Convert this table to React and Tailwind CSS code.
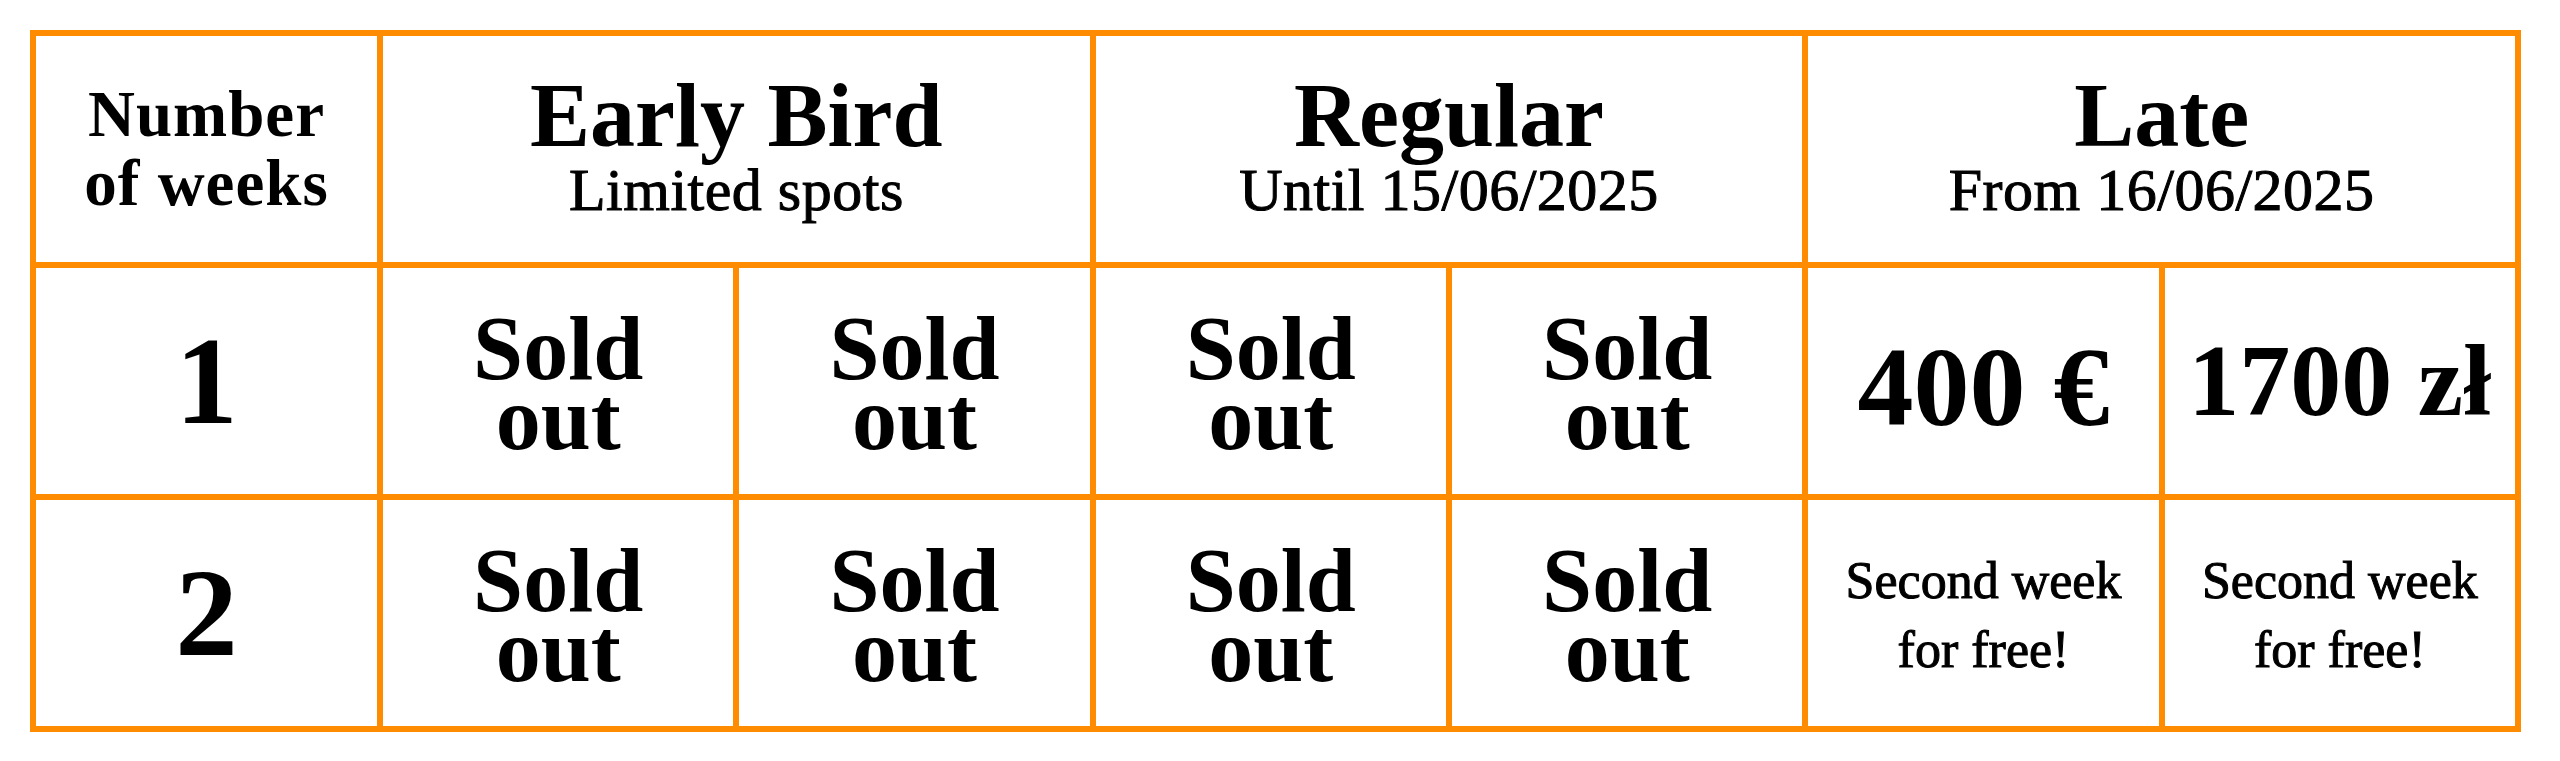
import React from "react";

const Header = ({ title, sub }) => (
  <div className="col-span-2 bg-white flex flex-col items-center justify-center">
    <span className="text-[90px] leading-[80px] font-bold">{title}</span>
    <span className="text-[60px] leading-[64px] mt-[2px] tracking-[0.5px] [-webkit-text-stroke:1px_black]">
      {sub}
    </span>
  </div>
);

const SoldOut = () => (
  <div className="bg-white flex flex-col items-center justify-center text-[90px] leading-[70px] font-bold pt-[6px]">
    <span>Sold</span>
    <span>out</span>
  </div>
);

const FreeWeek = () => (
  <div className="bg-white flex flex-col items-center justify-center text-[52px] leading-[69px] pt-[4px] [-webkit-text-stroke:1px_black]">
    <span>Second week</span>
    <span>for free!</span>
  </div>
);

const App = () => {
  return (
    <div className="min-h-[761px] bg-white pt-[30px] pl-[30px] font-['Liberation_Serif',serif] text-black">
      <div className="w-[2491px] h-[702px] bg-[#ff8c00] p-[6px] grid grid-cols-[341px_repeat(6,1fr)] grid-rows-3 gap-[6px]">
        {/* Header row */}
        <div className="bg-white flex flex-col items-center justify-center text-[65px] leading-[69px] font-bold tracking-[1px]">
          <span>Number</span>
          <span>of weeks</span>
        </div>
        <Header title="Early Bird" sub="Limited spots" />
        <Header title="Regular" sub="Until 15/06/2025" />
        <Header title="Late" sub="From 16/06/2025" />

        {/* 1 week */}
        <div className="bg-white flex items-center justify-center text-[125px] leading-none font-bold">
          1
        </div>
        <SoldOut />
        <SoldOut />
        <SoldOut />
        <SoldOut />
        <div className="bg-white flex items-center justify-center text-[112px] leading-none font-bold pt-[12px]">
          400 €
        </div>
        <div className="bg-white flex items-center justify-center text-[102px] leading-none font-bold">
          1700 zł
        </div>

        {/* 2 weeks */}
        <div className="bg-white flex items-center justify-center text-[125px] leading-none font-bold">
          2
        </div>
        <SoldOut />
        <SoldOut />
        <SoldOut />
        <SoldOut />
        <FreeWeek />
        <FreeWeek />
      </div>
    </div>
  );
};

export default App;
